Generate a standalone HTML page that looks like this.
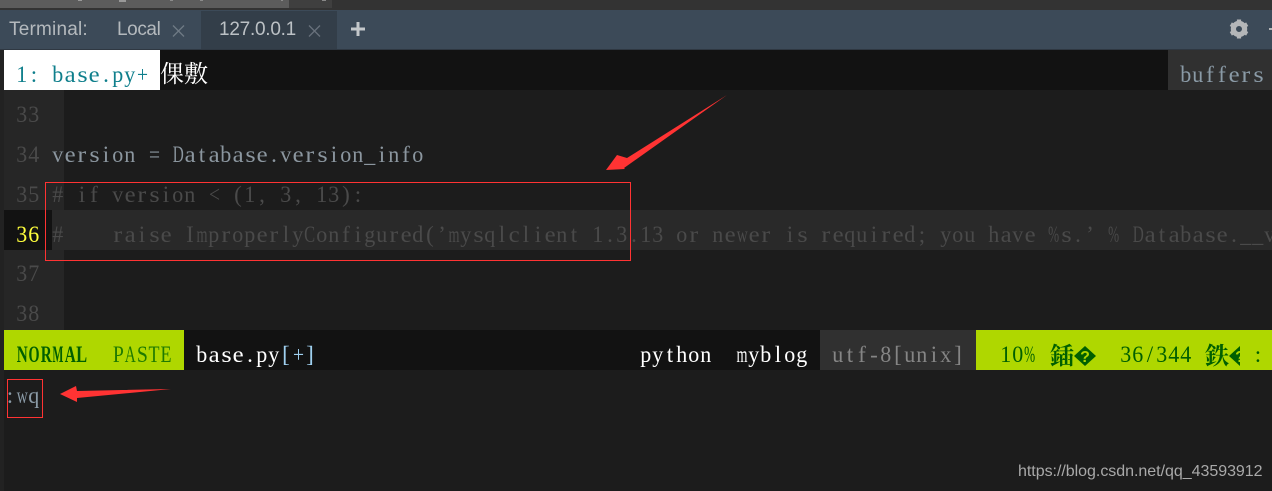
<!DOCTYPE html>
<html><head><meta charset="utf-8">
<style>
html,body{margin:0;padding:0;width:1272px;height:491px;overflow:hidden;background:#1c1c1c}
div{position:absolute}
.m{font-family:"Liberation Serif","Noto Serif CJK SC",serif;font-size:23px;line-height:40px;white-space:pre}
.c{font-family:"Noto Serif CJK SC",serif;font-size:24px;line-height:40px;white-space:pre}
.m i{display:inline-flex;justify-content:center;width:12px;font-style:normal}
.m i b{display:inline-block;font-weight:inherit;flex-shrink:0}
.u{font-family:"Liberation Sans",sans-serif;font-size:19px;line-height:38px;white-space:pre}
.n{left:16px;color:#4a4a4a}
</style></head><body>
<div style="left:0;top:0;width:1272px;height:10px;background:#333333"></div>
<div style="left:0;top:0;width:289px;height:8px;background:#5c5c5c"></div>
<div style="left:289px;top:0;width:43px;height:8px;background:#3f3f3f"></div>
<div style="left:78px;top:0;width:4px;height:1px;background:#999"></div>
<div style="left:119px;top:0;width:7px;height:2px;background:#999"></div>
<div style="left:170px;top:0;width:3px;height:1px;background:#8a8a8a"></div>
<div style="left:200px;top:0;width:3px;height:1px;background:#8a8a8a"></div>
<div style="left:281px;top:0;width:2px;height:1px;background:#8a8a8a"></div>
<div style="left:322px;top:0;width:4px;height:1px;background:#888"></div>
<div style="left:0;top:10px;width:1272px;height:40px;background:#3c4a58"></div>
<div style="left:201px;top:11px;width:136px;height:38px;background:#333e49"></div>
<div style="left:0;top:49px;width:1272px;height:1px;background:#2f3842"></div>
<div class="u" style="left:9px;top:11px;color:#b4b9bd;letter-spacing:.2px">Terminal:</div>
<div class="u" style="left:117px;top:11px;color:#b4b9bd;letter-spacing:-.4px">Local</div>
<div class="u" style="left:219px;top:11px;color:#bcc1c5;letter-spacing:-.25px">127.0.0.1</div>
<svg style="position:absolute;left:172px;top:25px" width="13" height="12"><path d="M1 .5L12 11.5M12 .5L1 11.5" stroke="#6f7a85" stroke-width="1.3"/></svg>
<svg style="position:absolute;left:308px;top:25px" width="13" height="12"><path d="M1 .5L12 11.5M12 .5L1 11.5" stroke="#68717b" stroke-width="1.3"/></svg>
<svg style="position:absolute;left:350px;top:21px" width="16" height="16"><path d="M8 1V15M1 8H15" stroke="#c4c8cb" stroke-width="3"/></svg>
<svg style="position:absolute;left:1229px;top:19px" width="20" height="20" viewBox="0 0 20 20"><circle cx="10" cy="10" r="5.6" fill="none" stroke="#b4b6b8" stroke-width="5.2"/><path d="M10 .5V5M10 15V19.5M1.8 5.2L5.7 7.5M14.3 12.5L18.2 14.8M1.8 14.8L5.7 12.5M14.3 7.5L18.2 5.2" stroke="#b4b6b8" stroke-width="4.2"/></svg>
<div style="left:1269px;top:28px;width:3px;height:2px;background:#b4b6b8"></div>

<div style="left:0;top:50px;width:4px;height:441px;background:#222"></div>
<div style="left:4px;top:50px;width:1268px;height:40px;background:#121212"></div>
<div style="left:4px;top:50px;width:156px;height:40px;background:#fff"></div>
<div class="m" style="left:16px;top:55px;color:#0f7f8c">1: base.py+</div>
<div class="c" style="left:160px;top:52px;color:#fff">倮敷</div>
<div style="left:1168px;top:50px;width:104px;height:40px;background:#303030"></div>
<div class="m" style="left:1180px;top:55px;color:#8a9aa6">buffers</div>

<div style="left:4px;top:90px;width:60px;height:240px;background:#262626"></div>
<div style="left:4px;top:210px;width:1268px;height:40px;background:#292929"></div>
<div style="left:4px;top:210px;width:48px;height:40px;background:#121212"></div>
<div class="m n" style="top:95px">33</div>
<div class="m n" style="top:135px">34</div>
<div class="m n" style="top:175px">35</div>
<div class="m n" style="top:215px;color:#ffff3c">36</div>
<div class="m n" style="top:254px">37</div>
<div class="m n" style="top:294px">38</div>
<div class="m" style="left:52px;top:135px;color:#8b969f">version = Database.version_info</div>
<div class="m" style="left:52px;top:175px;color:#4a4a4a"># if version &lt; (1, 3, 13):</div>
<div class="m" style="left:52px;top:215px;color:#4a4a4a">#    raise ImproperlyConfigured(’mysqlclient 1.3.13 or newer is required; you have %s.’ % Database.__v</div>

<div style="left:4px;top:330px;width:1268px;height:40px;background:#121212"></div>
<div style="left:4px;top:330px;width:180px;height:40px;background:#afd700"></div>
<div class="m" style="left:16px;top:335px;color:#005f00;font-weight:bold">NORMAL</div>
<div class="m" style="left:112px;top:335px;color:#1f7a00">PASTE</div>
<div class="m" style="left:196px;top:335px;color:#fff">base.py<span style="color:#9fd0f0">[+]</span></div>
<div class="m" style="left:640px;top:335px;color:#fff">python</div>
<div class="m" style="left:736px;top:335px;color:#fff">myblog</div>
<div style="left:820px;top:330px;width:156px;height:40px;background:#303030"></div>
<div class="m" style="left:832px;top:335px;color:#858585">utf-8[unix]</div>
<div style="left:976px;top:330px;width:296px;height:40px;background:#afd700"></div>
<div class="m" style="left:1000px;top:335px;color:#005f00">10%</div>
<div class="c" style="left:1050px;top:334px;color:#005f00;font-weight:bold">鍤</div>
<svg style="position:absolute;left:1074px;top:346px" width="22" height="20" viewBox="0 0 22 20"><path d="M11 0L22 10L11 20L0 10Z" fill="#005f00"/><text x="11" y="16" text-anchor="middle" font-family="Liberation Sans" font-size="16" font-weight="bold" fill="#afd700">?</text></svg>
<div class="m" style="left:1120px;top:335px;color:#005f00">36/344</div>
<div class="c" style="left:1205px;top:334px;color:#005f00;font-weight:bold">鉄</div>
<svg style="position:absolute;left:1229px;top:346px" width="11" height="20" viewBox="0 0 11 20"><path d="M11 0L22 10L11 20L0 10Z" fill="#005f00"/><text x="11" y="16" text-anchor="middle" font-family="Liberation Sans" font-size="16" font-weight="bold" fill="#afd700">?</text></svg>
<div class="m" style="left:1252px;top:335px;color:#005f00">:</div>

<div class="m" style="left:4px;top:376px;color:#8a9aa6">:wq</div>
<div style="left:7px;top:379px;width:34px;height:37px;border:1px solid #ff3333"></div>
<svg style="position:absolute;left:0;top:0" width="1272" height="491">
<rect x="45.5" y="182.5" width="585" height="78" fill="none" stroke="#ff3333" stroke-width="1"/>
<path d="M727 95L627 158L617 155L606 170L625 169L624 168Z" fill="#ff3333"/>
<path d="M171 389L77 391L76 386L60 394L77 402L77 398Z" fill="#ff3333"/>
</svg>
<div style="left:1018px;top:462px;font:16px/20px 'Liberation Sans',sans-serif;color:#a9a9a9;white-space:pre;letter-spacing:-.03px">https://blog.csdn.net/qq_43593912</div>
<script>
(function(){
var ctx=document.createElement('canvas').getContext('2d');
function wrap(node){
  Array.prototype.slice.call(node.childNodes).forEach(function(n){
    if(n.nodeType===1){wrap(n);return;}
    if(n.nodeType!==3)return;
    var f=document.createDocumentFragment();
    Array.from(n.nodeValue).forEach(function(ch){
      var i=document.createElement('i'),b=document.createElement('b');
      b.textContent=ch;
      var w=ctx.measureText(ch).width;
      var widen=/[a-eghkm-su-z]/.test(ch);
      var s=1;
      if(w>11)s=11/w;
      else if(widen)s=Math.min(11/w,1.15);
      if(s!==1)b.style.transform='scaleX('+s.toFixed(3)+')';
      i.appendChild(b);f.appendChild(i);
    });
    n.parentNode.replaceChild(f,n);
  });
}
document.querySelectorAll('.m').forEach(function(el){
  var s=getComputedStyle(el);
  ctx.font=s.fontWeight+' 23px "Liberation Serif"';
  wrap(el);
});
})();
</script>
</body></html>
